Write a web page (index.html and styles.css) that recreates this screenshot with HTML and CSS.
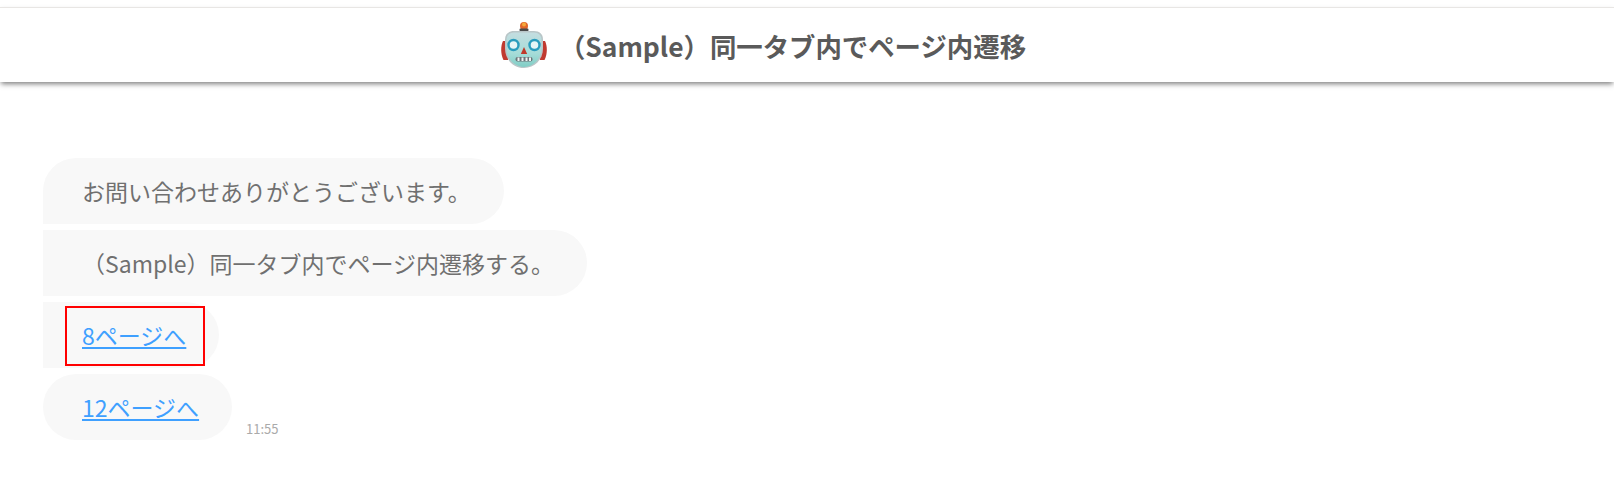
FILE: index.html
```html
<!DOCTYPE html>
<html lang="ja">

<head>
    <meta charset="UTF-8">
    <title>Sample</title>
    <link rel="stylesheet" href="styles.css">
</head>

<body>
    <header class="chat-header">
        <svg class="bot-icon" viewBox="0 0 48 48" width="48" height="48">
            <defs>
                <linearGradient id="face" x1="0" y1="0" x2="0" y2="1">
                    <stop offset="0" stop-color="#c3dde0" />
                    <stop offset="0.6" stop-color="#a6dcd8" />
                    <stop offset="1" stop-color="#80cdc5" />
                </linearGradient>
            </defs>
            <circle cx="24" cy="5" r="4" fill="#e0662a" />
            <circle cx="24" cy="3.500" r="2" fill="#f4a93a" />
            <rect x="19.500" y="7.500" width="9" height="2.800" rx="1" fill="#4a4a4a" />
            <path d="M3 20C.5 25 .5 33 3.500 39H8V20z" fill="#c03a30" />
            <path d="M45 20c2.500 5 2.500 13-.5 19H40V20z" fill="#c03a30" />
            <path d="M14 10h20c5.500 0 9 3 9 8.500v9C43 38.500 34.500 47 24 47S5 38.500 5 27.500v-9C5 13 8.500 10 14 10z" fill="#b9c6c8" />
            <path d="M14 11.500h20c4.500 0 7.500 3 7.500 7.500v8.500C41.500 37.500 33.500 46 24 46S6.500 37.500 6.500 27.500V19c0-4.500 3-7.500 7.500-7.500z" fill="url(#face)" />
            <circle cx="13.500" cy="24" r="5" fill="#e6f5f6" stroke="#2a9cbd" stroke-width="2.400" />
            <circle cx="34.500" cy="24" r="5" fill="#e6f5f6" stroke="#2a9cbd" stroke-width="2.400" />
            <path d="M24 26l3.200 7h-6.400z" fill="#c0392b" />
            <rect x="15.500" y="36" width="17" height="4.500" rx="2" fill="#6a7478" />
            <path d="M18.500 36.500v3.500M22.500 36.500v3.500M26.500 36.500v3.500M30 36.500v3.500" stroke="#eef2f2" stroke-width="2" />
        </svg>
        <h1 class="chat-title">（Sample）同一タブ内でページ内遷移</h1>
    </header>

    <main class="messages">
        <div class="bubble first">お問い合わせありがとうございます。</div>
        <div class="bubble">（Sample）同一タブ内でページ内遷移する。</div>
        <div class="bubble link-bubble">
            <a href="#">8ページへ</a>
            <span class="red-box"></span>
        </div>
        <div class="last-row">
            <div class="bubble last"><a href="#">12ページへ</a></div>
            <span class="time">11:55</span>
        </div>
    </main>
</body>

</html>
```

FILE: styles.css
```css
body {
    margin: 0;
    background-color: #ffffff;
    color: #707070;
    font-family: "Noto Sans CJK JP", "Noto Sans", sans-serif;
}

.chat-header {
    display: flex;
    align-items: center;
    justify-content: center;
    gap: 11px;
    height: 74px;
    margin-top: 7px;
    padding-right: 88px;
    background-color: #ffffff;
    border-top: 1px solid #e8e6e4;
    box-shadow: 0 3px 5px -1px #00000080;
}

.bot-icon {
    flex-shrink: 0;
}

.chat-title {
    margin: 0;
    color: #5a5a5a;
    font-size: 26.400px;
    font-weight: 700;
}

.messages {
    display: flex;
    flex-direction: column;
    align-items: flex-start;
    gap: 6px;
    padding: 76px 0 0 43px;
}

.bubble {
    position: relative;
    height: 66px;
    padding: 0 33px 0 39px;
    line-height: 66px;
    font-size: 23px;
    background-color: #f8f8f8;
    border-radius: 0 33px 33px 0;
}

.first {
    border-top-left-radius: 33px;
}

.last {
    border-radius: 33px;
}

.bubble a {
    color: #3fa0ff;
}

.red-box {
    position: absolute;
    left: 22px;
    top: 4px;
    width: 136px;
    height: 56px;
    border: 2px solid #ff0000;
}

.last-row {
    display: flex;
    align-items: flex-end;
    gap: 14px;
}

.time {
    padding-bottom: 2px;
    color: #aaaaaa;
    font-size: 13px;
}
```
